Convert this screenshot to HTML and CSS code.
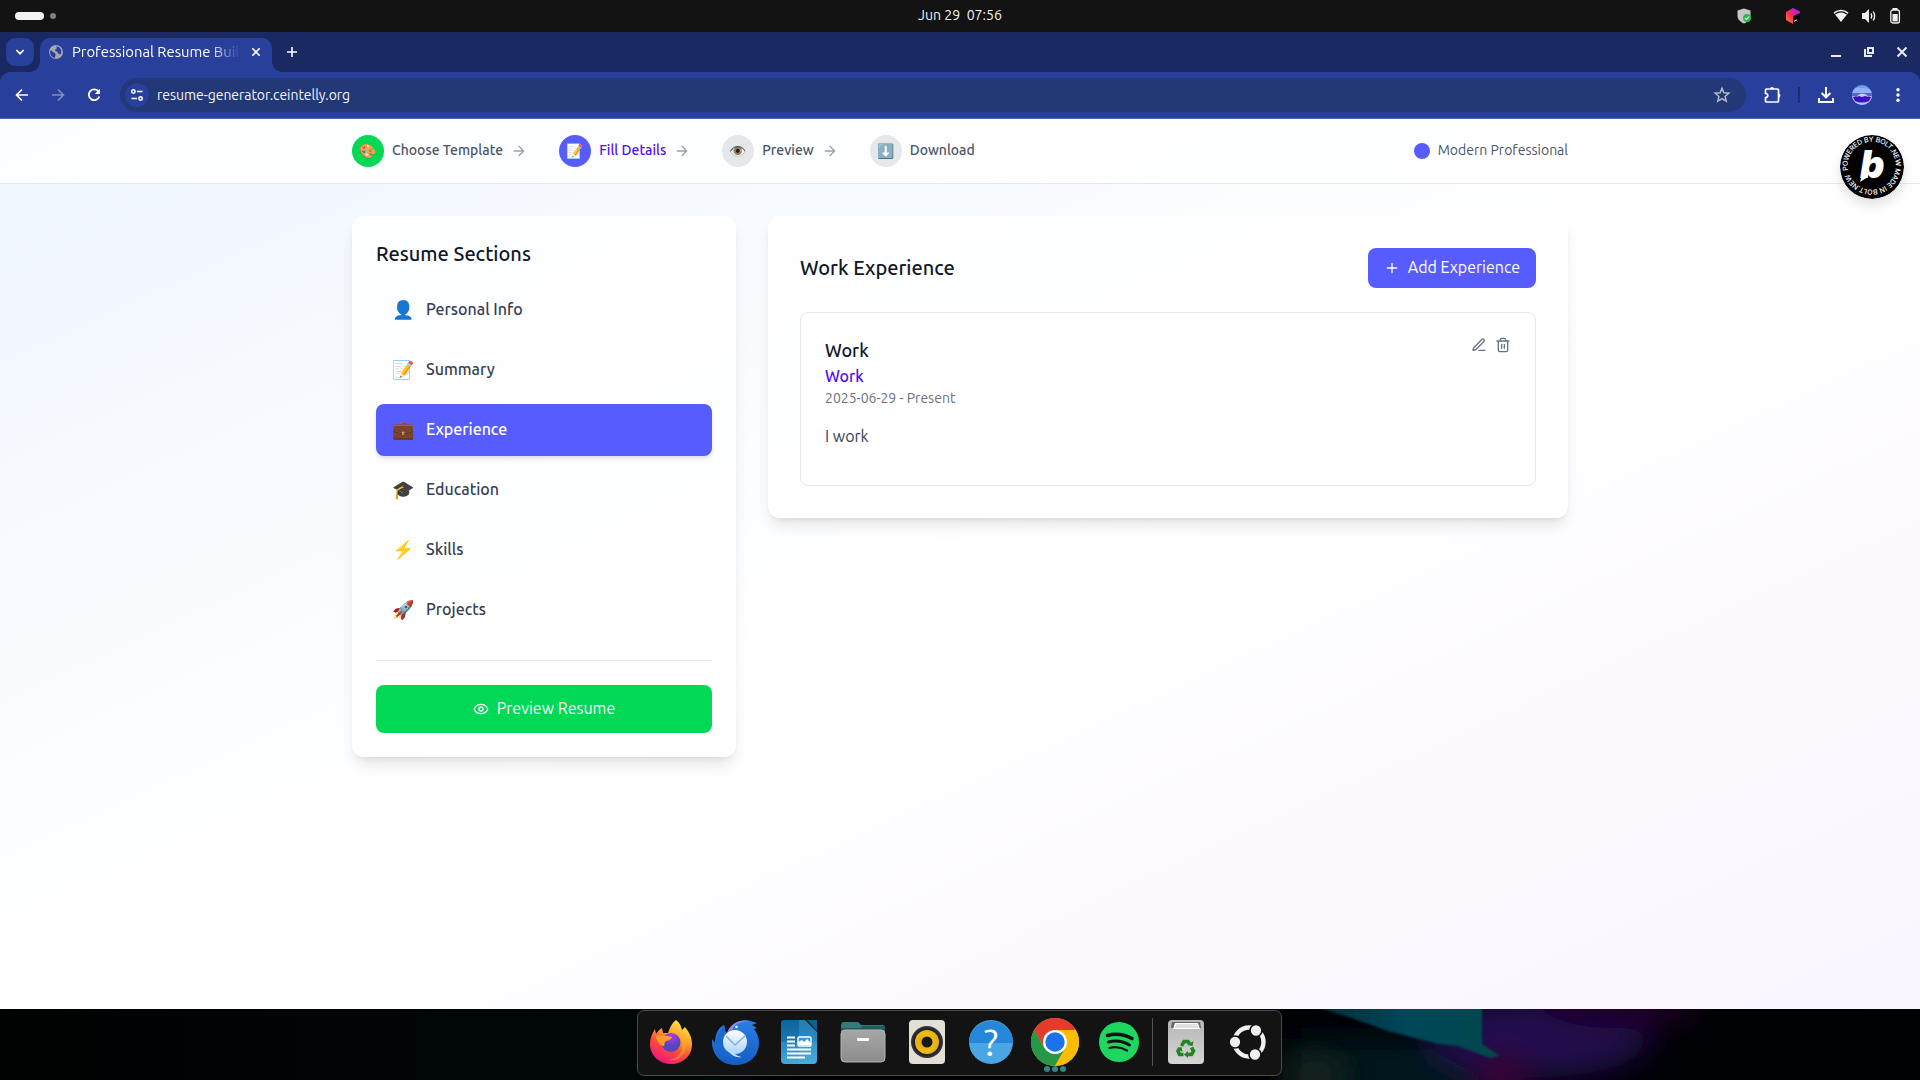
FILE: index.html
```html
<!DOCTYPE html>
<html lang="en">
<head>
<meta charset="utf-8">
<title>Professional Resume Builder</title>
<link rel="stylesheet" href="styles.css">
</head>
<body>
<div class="desktop">
  <div class="topbar">
    <div class="workspaces"><span class="ws-active"></span><span class="ws-dot"></span></div>
    <div class="clock"><span>Jun 29&nbsp; 07:56</span></div>
    <div class="tray">
      <svg class="tray-shield" width="16" height="16" viewBox="0 0 16 16"><path d="M7 0.500l6.500 2v5c0 4-3 6.500-6.500 8-3.500-1.500-6.500-4-6.500-8v-5z" fill="#c6c6c6"/><circle cx="10" cy="10" r="4" fill="#2db84d"/><path d="M8 10l1.500 1.500 2.700-2.800" stroke="#e8ffe8" fill="none" stroke-width="1.100"/></svg>
      <svg class="tray-box" width="16" height="16" viewBox="0 0 16 16"><defs><linearGradient id="jb" x1="0" y1="1" x2="1" y2="0"><stop offset="0" stop-color="#ff8a1f"/><stop offset=".45" stop-color="#fe2857"/><stop offset=".75" stop-color="#c41fd0"/><stop offset="1" stop-color="#7b2dff"/></linearGradient></defs><path d="M8 0l7 3.500v8.500l-7 4-7-4V4z" fill="url(#jb)"/><path d="M8 8l7-3v7l-7 4z" fill="#000"/><path d="M9 13.300l3-1.500" stroke="#fff"/></svg>
      <svg width="16" height="16" viewBox="0 0 16 16"><path d="M.5 4.500a11.500 11.500 0 0 1 15 0L8 14z" fill="#f0f0f0"/><path d="M2.200 6a9 9 0 0 1 11.600 0" stroke="#131313" stroke-width="1.200" fill="none"/></svg>
      <svg width="16" height="16" viewBox="0 0 16 16"><path d="M1 5h3l4-4v14l-4-4H1z" fill="#f0f0f0"/><path d="M10 5.500q1.600 2.500 0 5M12.200 3.500q2.800 4.500 0 9" stroke="#f0f0f0" stroke-width="1.400" fill="none"/></svg>
      <svg width="12" height="16" viewBox="0 0 12 16"><path d="M3.500 0h5v2h-5z" fill="#f0f0f0"/><rect x="1.800" y="2" width="8.600" height="13" rx="2" fill="none" stroke="#f0f0f0" stroke-width="1.300"/><rect x="3.500" y="6" width="5.200" height="7.400" fill="#f0f0f0"/></svg>
    </div>
  </div>

  <div class="browser-chrome">
    <div class="tabstrip">
      <div class="tab-search"><svg width="12" height="12" viewBox="0 0 12 12"><path d="M2.300 4L6 7.700 9.700 4" fill="none" stroke="#fff" stroke-width="1.700"/></svg></div>
      <div class="tab">
        <svg class="globe" width="16" height="16" viewBox="0 0 16 16"><circle cx="8" cy="8" r="7" fill="#a3a6ad"/><path d="M3.500 6.500C5 9 7 8 7.500 10c.3 1.500-.5 2-.5 4C3.500 13.500 1.500 10 2.200 7zM8 2.500c2-.3 4 1 5 3.200.5 1.500.3 3-.5 4.500-1.500.5-2.500-.5-2.700-1.700C9.500 7 7 7.500 7 6c0-1 2-1 2-2 0-.7-1-.8-1-1.500z" fill="#293f9c"/></svg>
        <span class="tab-title">Professional Resume Builder</span>
        <svg class="tab-close" width="12" height="12" viewBox="0 0 12 12"><path d="M2.300 2.300l7.400 7.400m0-7.400L2.300 9.700" stroke="#fff" stroke-width="1.600"/></svg>
      </div>
      <svg class="newtab" width="12" height="12" viewBox="0 0 12 12"><path d="M6 1v10M1 6h10" stroke="#fff" stroke-width="1.600"/></svg>
      <div class="window-controls">
        <svg width="12" height="12" viewBox="0 0 12 12"><path d="M1 10h10" stroke="#e8eaf2" stroke-width="2"/></svg>
        <svg width="12" height="12" viewBox="0 0 12 12"><path d="M5 2h5v5H5zM2 3v7h7" fill="none" stroke="#e8eaf2" stroke-width="2"/></svg>
        <svg width="12" height="12" viewBox="0 0 12 12"><path d="M1.500 1.500l9 9m0-9l-9 9" stroke="#e8eaf2" stroke-width="2"/></svg>
      </div>
    </div>

    <div class="toolbar">
      <svg class="nav-icon" width="16" height="16" viewBox="0 0 16 16"><path d="M14 8H3M8 2.500L2.500 8 8 13.500" fill="none" stroke="#fff" stroke-width="1.700"/></svg>
      <svg class="nav-icon dim" width="16" height="16" viewBox="0 0 16 16"><path d="M2 8h11M8 2.500L13.500 8 8 13.500" fill="none" stroke="#fff" stroke-width="1.700"/></svg>
      <svg class="nav-icon" width="16" height="16" viewBox="0 0 16 16"><path d="M12.600 4.600A5.400 5.400 0 1 0 13.300 9.500" fill="none" stroke="#fff" stroke-width="1.800"/><path d="M13.900 1.800v5.100H8.800z" fill="#fff"/></svg>
      <div class="omnibox">
        <div class="site-info"><svg width="14" height="14" viewBox="0 0 14 14"><g fill="none" stroke="#fff" stroke-width="1.500"><circle cx="3.400" cy="3.500" r="1.700"/><path d="M7 3.500h5.500M1.500 10.500H7"/><circle cx="10.600" cy="10.500" r="1.700"/></g></svg></div>
        <span class="url">resume-generator.ceintelly.org</span>
        <svg class="star" width="18" height="18" viewBox="0 0 18 18"><path d="M9 2.300l1.900 4.500 4.900.4-3.700 3.200 1.100 4.800L9 12.700l-4.200 2.500 1.100-4.800L2.200 7.200l4.900-.4z" fill="none" stroke="#b5b9c6" stroke-width="1.500"/></svg>
      </div>
      <svg class="puzzle" width="18" height="18" viewBox="0 0 18 18"><path d="M2.500 4q0-1 1-1h11q1 0 1 1v11q0 1-1 1h-11q-1 0-1-1v-3.500c3 0 3-4 0-4z" fill="none" stroke="#fff" stroke-width="1.700" stroke-linejoin="round"/><path d="M7 3a2 2 0 0 1 4 0zM15.500 7.500a2 2 0 0 1 0 4z" fill="#fff"/></svg>
      <span class="toolbar-sep"></span>
      <svg class="download" width="18" height="18" viewBox="0 0 18 18"><path d="M9 1v10M4.600 7L9 11.300 13.400 7M2 12v4h14v-4" fill="none" stroke="#fff" stroke-width="2"/></svg>
      <svg class="avatar" width="20" height="20" viewBox="0 0 20 20"><defs><clipPath id="avc"><circle cx="10" cy="10" r="10"/></clipPath></defs><g clip-path="url(#avc)"><path d="M0 0h20v20H0z" fill="#6f9bee"/><path d="M0 4q8-3 20 1v3H0z" fill="#8fb3f4"/><path d="M0 8h20v3H0z" fill="#5966cf"/><path d="M0 11h20v9H0z" fill="#b9bdee"/><path d="M1 12q9-3 18 0l-2 4q-7 3-14 0z" fill="#3a10c4"/><path d="M4 12q6-7 13 0l-4-1-3 1-3-1z" fill="#c8d4f4"/></g></svg>
      <svg class="kebab" width="16" height="16" viewBox="0 0 16 16"><g fill="#fff"><circle cx="8" cy="2.700" r="1.700"/><circle cx="8" cy="8" r="1.700"/><circle cx="8" cy="13.300" r="1.700"/></g></svg>
    </div>
  </div>

  <div class="page">
    <header class="steps-bar">
      <div class="container steps">
        <div class="step"><span class="step-icon done">🎨</span><span class="label">Choose Template</span><svg class="arrow" viewBox="0 0 24 24"><path d="M5 12h14M12 5l7 7-7 7"/></svg></div>
        <div class="step current"><span class="step-icon active">📝</span><span class="label">Fill Details</span><svg class="arrow" viewBox="0 0 24 24"><path d="M5 12h14M12 5l7 7-7 7"/></svg></div>
        <div class="step"><span class="step-icon">👁️</span><span class="label">Preview</span><svg class="arrow" viewBox="0 0 24 24"><path d="M5 12h14M12 5l7 7-7 7"/></svg></div>
        <div class="step"><span class="step-icon">⬇️</span><span class="label">Download</span></div>
        <div class="template"><span class="template-dot"></span><span class="label">Modern Professional</span></div>
      </div>
    </header>

    <main class="container content">
      <aside class="card sidebar">
        <h3 class="heading">Resume Sections</h3>
        <nav class="sections">
          <a class="section"><span class="emoji">👤</span><span class="label">Personal Info</span></a>
          <a class="section"><span class="emoji">📝</span><span class="label">Summary</span></a>
          <a class="section selected"><span class="emoji">💼</span><span class="label">Experience</span></a>
          <a class="section"><span class="emoji">🎓</span><span class="label">Education</span></a>
          <a class="section"><span class="emoji">⚡</span><span class="label">Skills</span></a>
          <a class="section"><span class="emoji">🚀</span><span class="label">Projects</span></a>
        </nav>
        <div class="sidebar-foot">
          <button class="btn preview"><svg viewBox="0 0 24 24"><path d="M2.060 12.350a1 1 0 0 1 0-.7 10.750 10.750 0 0 1 19.880 0 1 1 0 0 1 0 .7 10.750 10.750 0 0 1-19.880 0"/><circle cx="12" cy="12" r="3"/></svg><span class="label">Preview Resume</span></button>
        </div>
      </aside>

      <section class="card panel">
        <div class="panel-head">
          <h2 class="heading">Work Experience</h2>
          <button class="btn add"><svg viewBox="0 0 24 24"><path d="M5 12h14M12 5v14"/></svg><span class="label">Add Experience</span></button>
        </div>
        <article class="entry">
          <div class="entry-main">
            <h4 class="entry-title">Work</h4>
            <p class="entry-company">Work</p>
            <p class="entry-date">2025-06-29 - Present</p>
            <p class="entry-text">I work</p>
          </div>
          <div class="entry-actions">
            <svg viewBox="0 0 24 24"><path d="M12 20h9M16.380 3.620a1 1 0 0 1 3 3L7.370 18.640a2 2 0 0 1-.86.5l-2.870.84a.5.5 0 0 1-.62-.62l.84-2.870a2 2 0 0 1 .5-.86z"/></svg>
            <svg viewBox="0 0 24 24"><path d="M3 6h18M19 6v14c0 1-1 2-2 2H7c-1 0-2-1-2-2V6M8 6V4c0-1 1-2 2-2h4c1 0 2 1 2 2v2M10 11v6M14 11v6"/></svg>
          </div>
        </article>
      </section>
    </main>

    <svg class="bolt-badge" width="64" height="64" viewBox="0 0 64 64">
      <circle cx="32" cy="32" r="32" fill="#000"/>
      <path id="ring" d="M8.200 35.500A24 24 0 1 1 8.700 37.500" fill="none"/>
      <text class="ring-text"><textPath href="#ring" textLength="147">POWERED BY BOLT.NEW MADE IN BOLT.NEW</textPath></text>
      <text class="bolt-b" x="20" y="43">b</text>
      <path d="M23 36l-3 11 8-5z" fill="#fff"/>
    </svg>
  </div>

  <div class="wallpaper">
    <svg class="wall-art" width="1920" height="71" viewBox="0 0 1920 71" preserveAspectRatio="none">
      <defs>
        <filter id="b1" x="-50%" y="-150%" width="200%" height="400%"><feGaussianBlur stdDeviation="16"/></filter>
        <filter id="b2"><feGaussianBlur stdDeviation="1.300"/></filter>
        <linearGradient id="teal" x1="0" x2="1"><stop offset="0" stop-color="#032a35"/><stop offset=".5" stop-color="#04465a"/><stop offset="1" stop-color="#05464c"/></linearGradient>
        <linearGradient id="dim" x1="0" x2="1"><stop offset="0" stop-color="#000202"/><stop offset=".9" stop-color="#010808"/><stop offset="1" stop-color="#000104"/></linearGradient>
      </defs>
      <rect width="1920" height="71" fill="#000104"/>
      <rect width="800" height="71" fill="url(#dim)"/>
      <g filter="url(#b1)"><rect x="1290" y="30" width="220" height="60" fill="#04121a"/><ellipse cx="1540" cy="28" rx="110" ry="40" fill="#22104f"/><ellipse cx="1620" cy="-6" rx="80" ry="26" fill="#1a0522"/></g>
      <g filter="url(#b1)"><ellipse cx="1502" cy="68" rx="28" ry="22" fill="#3d0034"/><ellipse cx="1315" cy="66" rx="34" ry="16" fill="#1d281f"/></g>
      <path d="M1312-3H1482V35l18 12-10 2-32-12-20-2-50-13-40-14z" fill="url(#teal)" filter="url(#b2)"/>
    </svg>
    <div class="dock">
      <div class="app"><svg width="44" height="46" viewBox="0 0 44 46"><defs><linearGradient id="ff" x1=".8" y1="0" x2=".3" y2="1"><stop offset="0" stop-color="#fff04a"/><stop offset=".35" stop-color="#ffa52b"/><stop offset=".65" stop-color="#ff4a3d"/><stop offset="1" stop-color="#ee1384"/></linearGradient><radialGradient id="ffp" cx=".5" cy=".2"><stop offset="0" stop-color="#b636f0"/><stop offset="1" stop-color="#5347bd"/></radialGradient></defs><path d="M27 1c4 3 5 6 6 10l3-3c4 5 7 10 7 17 0 12-9 20-21 20S1 36 1 25c0-6 2-10 5-15l1 5c2-3 4-5 6-6l1 5 5 0c2-5 3-9 8-13z" fill="url(#ff)"/><path d="M27 12c9 4 13 12 9 20-3 7-9 10-16 9 9-1 14-8 13-14 1-6-1-11-6-15z" fill="#ffb52a" opacity=".5"/><circle cx="22" cy="23.500" r="9.500" fill="url(#ffp)"/><path d="M7 17c5-1 9 0 12 0l4 1c-1 4-6 3-7 5s0 3-1 4c-4 0-8-6-8-10z" fill="#ff9a2c"/></svg></div>
      <div class="app"><svg width="48" height="47" viewBox="0 0 48 47"><defs><linearGradient id="tb" x1=".5" y1="0" x2=".5" y2="1"><stop offset="0" stop-color="#2a7fe4"/><stop offset="1" stop-color="#135dc4"/></linearGradient><linearGradient id="tbe" x1="0" y1="0" x2="0" y2="1"><stop offset="0" stop-color="#fff"/><stop offset="1" stop-color="#a9d4fb"/></linearGradient></defs><path d="M1 20l3 4C4 15 7 9 13 6c1 3 0 5 3 8C20 4 28 1 36 1l10 3-5 2 5 3-3 1c4 5 5 10 5 14 0 13-10 22-23 22C10 46 0 36 1 20z" fill="url(#tb)"/><path d="M4 28C6 15 10 12 13 6c2 6 1 9-1 13-2 8 3 15 12 19-9 0-16-2-20-10z" fill="#1b69cf"/><path d="M16 14C20 5 27 1 36 2c-8 1-13 4-15 9z" fill="#9d86e8"/><circle cx="24" cy="23" r="12" fill="url(#tbe)"/><path d="M15 17l9 9 10-9" fill="none" stroke="#85afe3" stroke-width="1.500"/><path d="M17 31c6 2 7 6 14 7-7 1-11-2-14-7z" fill="#c2e2ff"/><circle cx="25.500" cy="8" r="1.300" fill="#e9f4ff"/></svg></div>
      <div class="app"><svg width="38" height="46" viewBox="0 0 38 46"><defs><linearGradient id="wr" x1="0" y1="0" x2="0" y2="1"><stop offset="0" stop-color="#0b659b"/><stop offset=".5" stop-color="#1b78ae"/><stop offset=".51" stop-color="#2888bf"/><stop offset="1" stop-color="#46a7d9"/></linearGradient></defs><path d="M4 1h21l12 12v28q0 4-4 4H5q-4 0-4-4V4q0-3 3-3z" fill="url(#wr)"/><path d="M19 1h6l12 12v28q0 4-4 4H19z" fill="#5ab7e8" opacity=".3"/><path d="M27 1h10v11z" fill="#0d5e91"/><path d="M7 18.500h8M7 22.500h8M7 26.500h8M7 30.500h24M7 34.500h24M7 38.500h18M7 34.500" stroke="#fff" stroke-width="2"/><rect x="18" y="18" width="13" height="9" rx="1" fill="#2f9ad9" stroke="#fff" stroke-width="1.400"/><path d="M18 26v-3l4-2 2 2 3-3 4 4v2z" fill="#fff"/></svg></div>
      <div class="app"><svg width="46" height="42" viewBox="0 0 46 42"><defs><linearGradient id="fo" x1="0" y1="0" x2="0" y2="1"><stop offset="0" stop-color="#a6a6a6"/><stop offset="1" stop-color="#8c8c8c"/></linearGradient></defs><path d="M1 14V4q0-3 3-3h13q2 0 3 2l1 1h21q3 0 3 3v10z" fill="#317d78"/><path d="M1 7l20 0 2-2h22v6H1z" fill="#225b59"/><rect x="1" y="9" width="44" height="32" rx="4" fill="url(#fo)" stroke="#b4b4b4"/><rect x="17" y="17" width="12" height="3" rx="1" fill="#fff"/></svg></div>
      <div class="app"><svg width="38" height="46" viewBox="0 0 38 46"><defs><radialGradient id="rb" cx=".3" cy=".5" r=".8"><stop offset="0" stop-color="#e2a912"/><stop offset=".5" stop-color="#eebd13"/><stop offset="1" stop-color="#dca80f"/></radialGradient></defs><rect x="1" y="1" width="36" height="44" rx="4" fill="#e3dfd6"/><circle cx="19" cy="23" r="16" fill="#35353d"/><circle cx="19" cy="23" r="14.500" fill="#24242a"/><circle cx="19" cy="23" r="12" fill="url(#rb)"/><circle cx="19" cy="23" r="5.500" fill="#18181b"/></svg></div>
      <div class="app"><svg width="46" height="46" viewBox="0 0 46 46"><circle cx="23" cy="23" r="22" fill="#4aa6e2"/><path d="M1 24a22 22 0 0 1 44 0z" fill="#2487d9"/><text class="help-mark" x="23" y="37" text-anchor="middle">?</text></svg></div>
      <div class="app chrome"><svg width="48" height="48" viewBox="0 0 48 48"><circle cx="24" cy="24" r="24" fill="#fbbc04"/><path d="M3.200 12A24 24 0 0 1 44.800 12H24L13.600 30z" fill="#e33b2e"/><path d="M3.200 12A24 24 0 0 0 24 48L34.400 30 13.600 30z" fill="#279847"/><path d="M24 12h20.800A24 24 0 0 1 24 48L34.400 30z" fill="#fbbc04"/><circle cx="24" cy="24" r="12" fill="#fff"/><circle cx="24" cy="24" r="9.700" fill="#1a73e8"/></svg><span class="running"><i></i><i></i><i></i></span></div>
      <div class="app"><svg width="40" height="40" viewBox="0 0 40 40"><circle cx="20" cy="20" r="20" fill="#1ed760"/><g fill="none" stroke="#131313" stroke-linecap="round"><path d="M8.500 13.500q12-3.500 24.500 3" stroke-width="3.600"/><path d="M9.500 20q11-3 21 3" stroke-width="3"/><path d="M10.500 26q9-2.500 17.500 2.600" stroke-width="2.300"/></g></svg></div>
      <span class="dock-sep"></span>
      <div class="app"><svg width="38" height="46" viewBox="0 0 38 46"><defs><linearGradient id="tr" x1="0" y1="0" x2="0" y2="1"><stop offset="0" stop-color="#b5b5b5"/><stop offset="1" stop-color="#d6d6d6"/></linearGradient></defs><rect x="1" y="1" width="36" height="44" rx="4" fill="url(#tr)"/><path d="M4 9l1-6h28l1 6z" fill="#666"/><path d="M6 10l2-6h23l2 6z" fill="#fff"/><path d="M9 6h21M8 8h23" stroke="#999" stroke-width=".6"/><g fill="none" stroke="#238620" stroke-width="3.600"><path d="M14.500 27l2.500-4.500h4l2 3"/><path d="M24.500 28.500l2 3.500-2 3.500h-4"/><path d="M16.500 35.500h-4l-1.500-3.500 2-3"/></g><path d="M20.500 26l5 1 1-5zM21 32v7l-4-3.500zM10 29l4.500-1 1 5z" fill="#238620"/></svg></div>
      <div class="app last"><svg width="38" height="38" viewBox="0 0 38 38"><circle cx="20" cy="19" r="14.500" fill="none" stroke="#f0f0f0" stroke-width="4.400"/><g fill="#f0f0f0" stroke="#131313" stroke-width="1.700"><circle cx="6" cy="19" r="6"/><circle cx="27" cy="7.500" r="6"/><circle cx="26" cy="31.500" r="6"/></g></svg></div>
    </div>
  </div>
</div>
</body>
</html>
```
FILE: styles.css
```css
* { box-sizing: border-box; }
body { margin: 0; font-family: Ubuntu, "Noto Sans", "Noto Color Emoji", sans-serif; color: #101828; }
h2, h3, h4, p { margin: 0; }
svg { display: block; flex: none; }
.desktop { width: 1920px; height: 1080px; overflow: hidden; display: flex; flex-direction: column; background: #000; }

/* system bar */
.topbar { height: 32px; flex: none; background: #131313; display: grid; grid-template-columns: 1fr auto 1fr; align-items: center; }
.workspaces { display: flex; align-items: center; gap: 6px; padding-left: 15px; }
.ws-active { width: 29px; height: 8px; border-radius: 4px; background: #f2f2f2; }
.ws-dot { width: 6px; height: 6px; border-radius: 50%; background: #808080; }
.clock { color: #f2f2f2; font-size: 14.1px; line-height: 20px; padding-bottom: 2px; white-space: nowrap; }
.tray { display: flex; justify-content: flex-end; align-items: center; gap: 12px; padding-right: 18px; }
.tray { padding-right: 19px; }
.tray-shield { margin-right: 20px; }
.tray-box { margin-right: 20px; }

/* browser window */
.browser-chrome { flex: none; background: #1a2962; }
.tabstrip { height: 40px; display: flex; align-items: center; padding: 6px 12px 0 6px; }
.tab-search { width: 28px; height: 28px; border-radius: 9px; background: #293f9c; display: flex; align-items: center; justify-content: center; margin: 0 6px 6px 0; }
.tab { width: 232px; height: 34px; background: #293f9c; border-radius: 10px 10px 0 0; display: flex; align-items: center; padding: 0 10px 6px 8px; position: relative; }
.tab::before, .tab::after { content: ""; position: absolute; bottom: 0; width: 10px; height: 10px; }
.tab::before { left: -10px; background: radial-gradient(circle at 0 0, transparent 9.5px, #293f9c 10px); }
.tab::after { right: -10px; background: radial-gradient(circle at 100% 0, transparent 9.5px, #293f9c 10px); }
.tab-title { flex: none; width: 168px; margin: 0 10px 0 8px; overflow: hidden; white-space: nowrap; color: #fff; font-size: 14.8px; line-height: 20px; -webkit-mask-image: linear-gradient(90deg, #000 138px, transparent 168px); mask-image: linear-gradient(90deg, #000 138px, transparent 168px); }
.newtab { margin: 0 0 6px 14px; }
.window-controls { margin-left: auto; display: flex; gap: 21px; padding-bottom: 6px; }
.toolbar { height: 47px; background: #293f9c; border-radius: 10px 10px 0 0; box-shadow: inset 0 -1px 0 #4a6db8; display: flex; align-items: center; padding: 0 14px 1px; }
.nav-icon { margin-right: 20px; }
.nav-icon.dim { opacity: .4; }
.omnibox { flex: 1; height: 34px; margin-left: -2px; border-radius: 17px; background: #233876; display: flex; align-items: center; padding: 0 15px 0 5px; }
.site-info { width: 24px; height: 24px; border-radius: 50%; background: #293f9c; display: flex; align-items: center; justify-content: center; margin-right: 8px; }
.url { color: #f4f5fa; font-size: 14px; line-height: 20px; letter-spacing: -.04px; white-space: nowrap; }
.star { margin-left: auto; }
.puzzle { margin-left: 17px; }
.toolbar-sep { width: 2px; height: 16px; background: #1b2d6e; margin: 0 17px; }
.download { margin-right: 17px; }
.avatar { margin-right: 18px; }

/* page */
.page { position: relative; height: 890px; flex: none; background: linear-gradient(to bottom right, #eff6ff, #fff 50%, #faf5ff); }
.container { width: 1216px; margin: 0 auto; }
.label { padding-bottom: 2px; }
.steps-bar { height: 65px; background: rgba(255, 255, 255, .8); border-bottom: 1px solid #e5e7eb; }
.steps { height: 64px; display: flex; align-items: center; gap: 32px; font-size: 14px; line-height: 20px; color: #4a5565; font-weight: 500; }
.step { display: flex; align-items: center; gap: 8px; white-space: nowrap; }
.step.current { color: #4f0ff8; }
.step-icon { width: 32px; height: 32px; border-radius: 50%; background: #e5e7eb; display: flex; align-items: center; justify-content: center; font-size: 14px; }
.step-icon.done { background: #00d856; }
.step-icon.active { background: #575cff; }
.arrow, .btn svg, .entry-actions svg { width: 16px; height: 16px; fill: none; stroke: currentColor; stroke-width: 2; stroke-linecap: round; stroke-linejoin: round; }
.arrow { color: #99a1af; }
.template { margin-left: auto; display: flex; align-items: center; gap: 8px; font-weight: 400; }
.template-dot { width: 16px; height: 16px; border-radius: 50%; background: #575cff; }

.content { display: grid; grid-template-columns: 384px 800px; gap: 32px; padding-top: 32px; align-items: start; }
.card { background: rgba(255, 255, 255, .8); border-radius: 12px; box-shadow: 0 10px 15px -3px rgba(0, 0, 0, .1), 0 4px 6px -4px rgba(0, 0, 0, .1); }
.sidebar { padding: 24px; }
.heading { font-size: 20px; line-height: 28px; font-weight: 550; white-space: nowrap; }
.sections { display: flex; flex-direction: column; gap: 8px; margin-top: 16px; }
.section { display: flex; align-items: center; gap: 12px; height: 52px; padding: 0 16px; border-radius: 8px; color: #364153; font-weight: 500; font-size: 16px; line-height: 24px; white-space: nowrap; }
.section.selected { background: #575cff; color: #fff; box-shadow: 0 4px 6px -1px rgba(0, 0, 0, .1), 0 2px 4px -2px rgba(0, 0, 0, .1); }
.emoji { width: 22px; font-size: 18px; line-height: 28px; font-weight: 400; padding-bottom: 2px; }
.sidebar-foot { margin-top: 24px; padding-top: 24px; border-top: 1px solid #e5e7eb; }
.btn { border: 0; border-radius: 8px; color: #fff; font-family: inherit; font-size: 16px; line-height: 24px; display: flex; align-items: center; justify-content: center; gap: 8px; white-space: nowrap; }
.preview { width: 100%; height: 48px; background: #00d856; }
.panel { padding: 32px; }
.panel-head { display: flex; align-items: center; justify-content: space-between; margin-bottom: 24px; }
.add { width: 168px; height: 40px; background: #575cff; padding: 0; }
.entry { display: flex; justify-content: space-between; border: 1px solid #e5e7eb; border-radius: 8px; padding: 23px 24px 37px; background: rgba(255, 255, 255, .8); }
.entry-title { font-size: 18px; line-height: 28px; font-weight: 550; }
.entry-company { font-size: 16px; line-height: 24px; font-weight: 500; color: #4f0ff8; }
.entry-date { font-size: 14px; line-height: 20px; color: #6a7282; }
.entry-text { margin-top: 16px; font-size: 16px; line-height: 24px; color: #364153; }
.entry-actions { display: flex; gap: 8px; padding-top: 1px; color: #6a7282; }

.bolt-badge { position: absolute; left: 1840px; top: 16px; border-radius: 50%; box-shadow: 0 6px 12px rgba(0, 0, 0, .12); }
.ring-text { font: 500 7px Inter, sans-serif; fill: #fff; }
.bolt-b { font: italic 900 38px Inter, sans-serif; fill: #fff; }

/* desktop dock */
.wallpaper { position: relative; height: 71px; flex: none; display: flex; justify-content: center; align-items: flex-start; }
.wall-art { position: absolute; inset: 0; }
.dock { position: relative; width: 645px; height: 66px; margin: 1px 1px 0 0; background: #131313; border: 1px solid #4b4b4b; border-radius: 7px; display: flex; align-items: center; padding: 0 1px; }
.app { position: relative; width: 64px; height: 64px; flex: none; display: flex; align-items: center; justify-content: center; padding-bottom: 2px; }
.app.last { width: 60px; }
.dock-sep { width: 1px; height: 48px; background: #555; margin: 0 1px 2px; }
.running { position: absolute; bottom: 3px; left: 21px; display: flex; gap: 2px; }
.running i { width: 6px; height: 6px; border-radius: 50%; background: #31868a; }
.help-mark { font: 400 37px Ubuntu, "Noto Sans", sans-serif; fill: #fff; }
```
